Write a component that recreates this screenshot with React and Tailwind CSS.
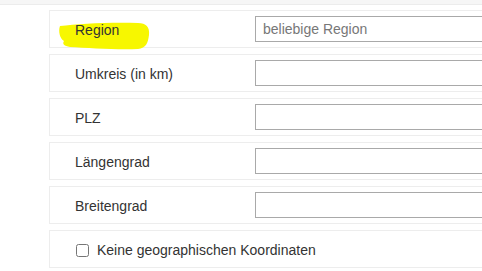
import React from 'react';

const rows = [
  { label: 'Region', placeholder: 'beliebige Region', mark: true },
  { label: 'Umkreis (in km)' },
  { label: 'PLZ' },
  { label: 'Längengrad' },
  { label: 'Breitengrad' },
];

// Yellow marker stroke drawn over the first label
const Highlight = () => (
  <svg
    className="absolute left-[8px] top-[10px]"
    width="94"
    height="30"
    viewBox="0 0 94 30"
  >
    <path
      d="M2 5 C20 3 50 1 80 2 C88 2 92 6 91 14 C90 22 88 27 80 28 C60 29 30 27 12 26 C6 25 4 23 6 20 C2 18 0 10 2 5 Z"
      fill="#f7f700"
    />
  </svg>
);

const FieldRow = ({ label, placeholder, mark }) => (
  <div className="relative flex h-[38px] items-center border border-[#ededed] bg-white">
    {mark && <Highlight />}
    <label className="relative w-[205px] pl-[25px] pt-[3px] text-[14px] text-[#333]">{label}</label>
    <input
      className="h-[26px] flex-1 border border-[#a9a9a9] bg-white px-[7px] text-[14px] text-[#333] placeholder:text-[#777] outline-none"
      placeholder={placeholder || ''}
    />
  </div>
);

export default function App() {
  return (
    <div
      className="h-[271px] w-[482px] overflow-hidden bg-white"
      style={{ fontFamily: '"Liberation Sans", Arial, sans-serif' }}
    >
      <div className="h-[5px] border-b border-[#ececec] bg-[#f6f6f6]" />
      <div className="ml-[49px] mr-[-20px] flex flex-col gap-[6px] pt-[5px]">
        {rows.map((r) => (
          <FieldRow key={r.label} {...r} />
        ))}
        <div className="flex h-[38px] items-center border border-[#ededed] bg-white pl-[26px] pt-[2px]">
          <input
            type="checkbox"
            className="h-[13px] w-[13px] accent-[#ddd]"
          />
          <span className="ml-[8px] text-[14px] text-[#333]">
            Keine geographischen Koordinaten
          </span>
        </div>
      </div>
    </div>
  );
}
